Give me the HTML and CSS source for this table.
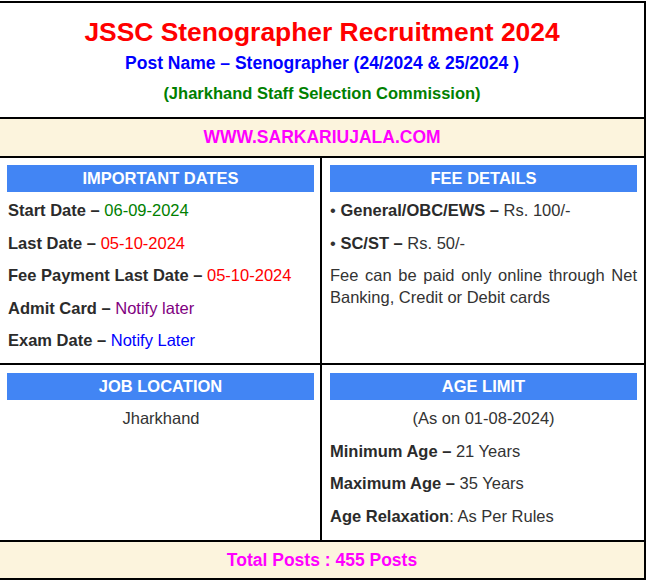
FILE: index.html
```html
<!DOCTYPE html>
<html>
<head>
<meta charset="utf-8">
<link rel="stylesheet" href="styles.css">
</head>
<body>
<div class="board">
  <div class="head">
    <h1 class="title">JSSC Stenographer Recruitment 2024</h1>
    <p class="post">Post Name – Stenographer (24/2024 &amp; 25/2024 )</p>
    <p class="org">(Jharkhand Staff Selection Commission)</p>
  </div>
  <div class="band">WWW.SARKARIUJALA.COM</div>
  <div class="grid">
    <div class="cell cell-left">
      <div class="cap">IMPORTANT DATES</div>
      <p class="item"><b>Start Date –</b> <span class="green">06-09-2024</span></p>
      <p class="item"><b>Last Date –</b> <span class="red">05-10-2024</span></p>
      <p class="item"><b>Fee Payment Last Date –</b> <span class="red">05-10-2024</span></p>
      <p class="item"><b>Admit Card –</b> <span class="purple">Notify later</span></p>
      <p class="item"><b>Exam Date –</b> <span class="blue">Notify Later</span></p>
    </div>
    <div class="cell cell-right">
      <div class="cap">FEE DETAILS</div>
      <p class="item">• <b>General/OBC/EWS –</b> Rs. 100/-</p>
      <p class="item">• <b>SC/ST –</b> Rs. 50/-</p>
      <p class="item justify">Fee can be paid only online through Net Banking, Credit or Debit cards</p>
    </div>
    <div class="cell cell-left row2">
      <div class="cap">JOB LOCATION</div>
      <p class="item center">Jharkhand</p>
    </div>
    <div class="cell cell-right row2">
      <div class="cap">AGE LIMIT</div>
      <p class="item center">(As on 01-08-2024)</p>
      <p class="item"><b>Minimum Age –</b> 21 Years</p>
      <p class="item"><b>Maximum Age –</b> 35 Years</p>
      <p class="item"><b>Age Relaxation</b>: As Per Rules</p>
    </div>
  </div>
  <div class="band total">Total Posts : 455 Posts</div>
</div>
</body>
</html>
```

FILE: styles.css
```css
html, body {
  margin: 0;
  padding: 0;
  background: #ffffff;
}
body {
  font-family: "Liberation Sans", Arial, sans-serif;
  color: #333333;
  overflow: hidden;
}
.board {
  margin-top: 1px;
  margin-left: -2px;
  width: 648px;
  box-sizing: border-box;
  border: 2px solid #000;
}
.head {
  padding: 14px 0 9px;
  text-align: center;
  border-bottom: 2px solid #000;
}
.title {
  margin: 0;
  font-size: 26.4px;
  line-height: 31px;
  font-weight: bold;
  color: #ff0000;
}
.post {
  margin: 0;
  font-size: 17.5px;
  line-height: 30px;
  font-weight: bold;
  color: #0000ff;
}
.org {
  margin: 0;
  font-size: 16.5px;
  line-height: 30px;
  font-weight: bold;
  color: #008000;
}
.band {
  background: #fcf4dd;
  text-align: center;
  font-size: 17.5px;
  font-weight: bold;
  color: #ff00ff;
  line-height: 37px;
}
.total {
  line-height: 36px;
}
.grid {
  display: grid;
  grid-template-columns: 322px 1fr;
  border-top: 2px solid #000;
  border-bottom: 2px solid #000;
}
.cell {
  padding: 7px 7px 12px;
}
.cell-left {
  border-right: 2px solid #000;
  padding-right: 6px;
}
.cell-left .item {
  padding-left: 1px;
}
.cell-right {
  padding-left: 8px;
}
.row2 {
  border-top: 2px solid #000;
  padding-top: 8px;
  padding-bottom: 13px;
}
.cap {
  background: #4285f4;
  color: #ffffff;
  font-weight: bold;
  font-size: 16.5px;
  line-height: 27px;
  text-align: center;
}
.item {
  margin: 10.5px 0 0;
  font-size: 16.5px;
  line-height: 22px;
}
.cap + .item {
  margin-top: 7px;
}
.item b {
  color: #2b2b2b;
}
.justify {
  text-align: justify;
}
.center {
  text-align: center;
}
.green { color: #008000; }
.red { color: #ff0000; }
.purple { color: #800080; }
.blue { color: #0000ff; }
```
